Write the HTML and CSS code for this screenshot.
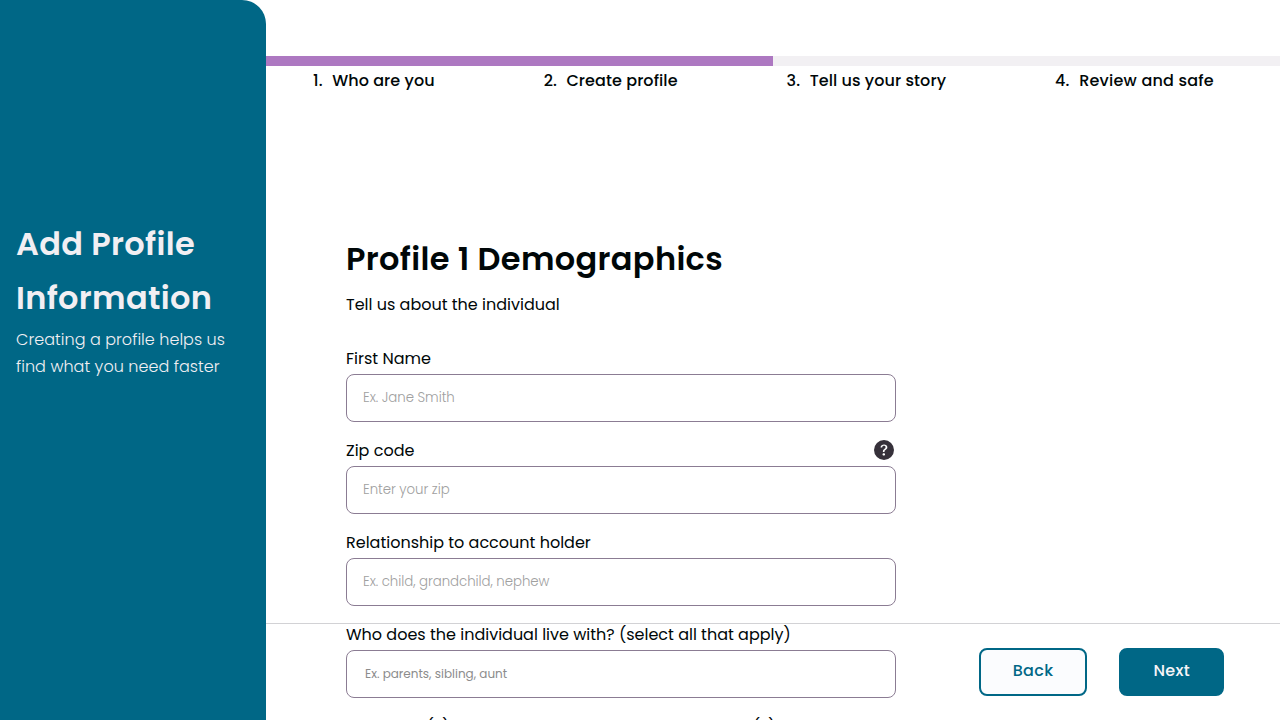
FILE: index.html
```
<!DOCTYPE html>
<html lang="en">
<head>
<meta charset="utf-8">
<title>Add Profile Information</title>
<link rel="stylesheet" href="styles.css">
</head>
<body>
<div class="app">
  <aside class="sidebar">
    <h1 class="heading">Add Profile Information</h1>
    <p class="sidebar-text">Creating a profile helps us find what you need faster</p>
  </aside>
  <main class="main">
    <div class="progress"><div class="progress-fill"></div></div>
    <ol class="steps">
      <li class="step"><span>1.</span><span>Who are you</span></li>
      <li class="step"><span>2.</span><span>Create profile</span></li>
      <li class="step"><span>3.</span><span>Tell us your story</span></li>
      <li class="step step-last"><span>4.</span><span>Review and safe</span></li>
    </ol>
    <form class="form">
      <h2 class="heading">Profile 1 Demographics</h2>
      <p class="intro">Tell us about the individual</p>
      <div class="field">
        <label class="label" for="name">First Name</label>
        <input class="input" id="name" placeholder="Ex. Jane Smith">
      </div>
      <div class="field">
        <div class="label-row">
          <label class="label" for="zip">Zip code</label>
          <svg class="help" viewBox="0 0 16 16" width="20" height="20"><path fill="#36313a" d="M16 8A8 8 0 1 1 0 8a8 8 0 0 1 16 0M5.496 6.033h.825c.138 0 .248-.113.266-.25.09-.656.54-1.134 1.342-1.134.686 0 1.314.343 1.314 1.168 0 .635-.374.927-.965 1.371-.673.489-1.206 1.06-1.168 1.987l.003.217a.25.25 0 0 0 .25.246h.811a.25.25 0 0 0 .25-.25v-.105c0-.718.273-.927 1.01-1.486.609-.463 1.244-.977 1.244-2.056 0-1.511-1.276-2.241-2.673-2.241-1.267 0-2.655.59-2.75 2.286a.237.237 0 0 0 .241.247m2.325 6.443c.61 0 1.029-.394 1.029-.927 0-.552-.42-.94-1.029-.94-.584 0-1.009.388-1.009.94 0 .533.425.927 1.01.927z"/></svg>
        </div>
        <input class="input" id="zip" placeholder="Enter your zip">
      </div>
      <div class="field">
        <label class="label" for="relationship">Relationship to account holder</label>
        <input class="input" id="relationship" placeholder="Ex. child, grandchild, nephew">
      </div>
      <div class="field">
        <label class="label" for="household">Who does the individual live with? (select all that apply)</label>
        <div class="input select" id="household">Ex. parents, sibling, aunt</div>
      </div>
      <div class="columns">
        <span class="label">Language(s)</span>
        <span class="label">Communication(s)</span>
      </div>
    </form>
  </main>
  <footer class="footer">
    <button class="button button-outline">Back</button>
    <button class="button">Next</button>
  </footer>
</div>
</body>
</html>
```
FILE: styles.css
```
* { box-sizing: border-box; }
body {
  margin: 0;
  color: #000708;
  background: #fff;
  font: 400 16px/1.7 Poppins, "Open Sans", sans-serif;
}
h1, h2, p, ol { margin: 0; padding: 0; }
.app {
  position: relative;
  display: flex;
  height: 720px;
  overflow: hidden;
}
.sidebar {
  flex: 0 0 266px;
  padding: 217px 16px 0;
  color: #f2eff3;
  background: #006786;
  border-top-right-radius: 24px;
}
.heading {
  font-size: 32px;
  font-weight: 600;
  line-height: 54.4px;
  letter-spacing: .0105em;
}
.sidebar-text {
  font-weight: 300;
  letter-spacing: .04px;
}
.main {
  flex: 1;
  padding-top: 56px;
}
.progress {
  height: 10px;
  background: #f2f0f3;
}
.progress-fill {
  width: 50%;
  height: 100%;
  background: #ad78c1;
}
.steps {
  display: flex;
  justify-content: space-between;
  padding: 1px 66px 0 47px;
  font-weight: 500;
  letter-spacing: .08px;
  list-style: none;
}
.step {
  display: flex;
  gap: 9.5px;
}
.step-last { letter-spacing: .22px; }
.form {
  width: 630px;
  padding: 138px 0 0 80px;
}
.intro {
  margin: 4px 0 27px;
  line-height: 27px;
}
.field { margin-bottom: 15px; }
.label {
  display: block;
  margin-bottom: 2px;
  line-height: 27px;
}
.label-row {
  display: flex;
  align-items: center;
  justify-content: space-between;
}
.help { margin: 0 2px 2px 0; }
.input {
  display: flex;
  align-items: center;
  width: 550px;
  height: 48px;
  padding: 0 16px;
  color: #000708;
  background: none;
  border: 1px solid #8b7c93;
  border-radius: 8px;
  font: 300 13.333px Poppins, "Open Sans", sans-serif;
  letter-spacing: -.05px;
}
.input::placeholder {
  color: #a0a0a0;
  opacity: 1;
}
.select {
  padding: 0 18px;
  color: #8c8c8c;
  font-size: 12px;
  font-weight: 400;
  letter-spacing: 0;
}
.columns {
  display: grid;
  grid-template-columns: 1fr 1fr;
  gap: 2px;
}
.footer {
  position: absolute;
  right: 0;
  bottom: 0;
  left: 266px;
  display: flex;
  justify-content: flex-end;
  gap: 32px;
  height: 97px;
  padding: 24px 56px;
  border-top: 1px solid #d2d2d5;
}
.button {
  height: 48px;
  padding: 0 32px 3px;
  color: #f7f5f8;
  background: #006786;
  border: 2px solid #006786;
  border-radius: 8px;
  font: 500 16px Poppins, "Open Sans", sans-serif;
  letter-spacing: .02em;
}
.button-outline {
  color: #006786;
  background: #fbfcfe;
}
```
